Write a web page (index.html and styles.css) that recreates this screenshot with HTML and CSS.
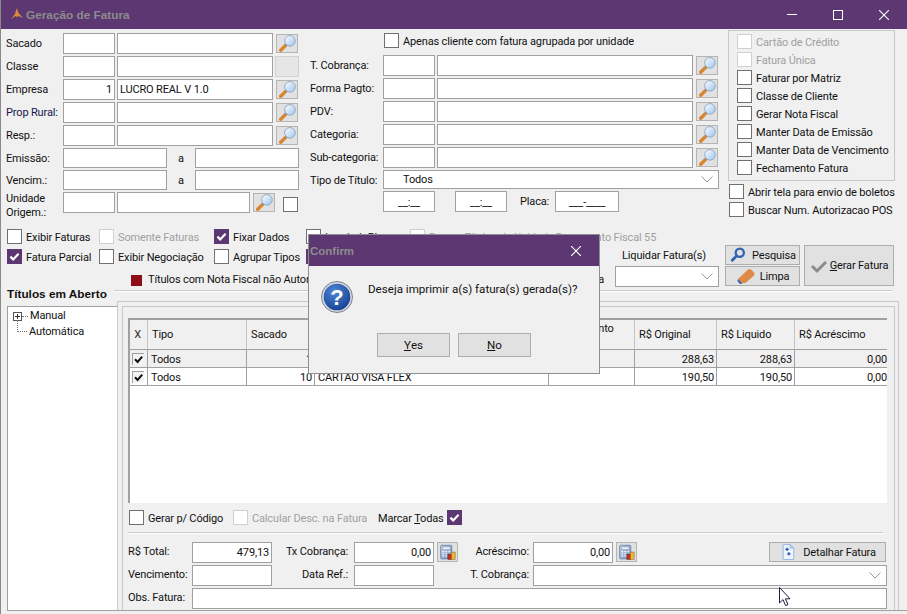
FILE: index.html
```html
<!DOCTYPE html>
<html lang="pt">
<head>
<meta charset="utf-8">
<title>Geração de Fatura</title>
<link rel="stylesheet" href="styles.css">
</head>
<body>
<svg class="sprite" aria-hidden="true">
  <defs>
    <linearGradient id="lens" x1="0" y1="0" x2="1" y2="1"><stop offset="0" stop-color="#ffffff"/><stop offset="1" stop-color="#9cc4ee"/></linearGradient>
    <linearGradient id="calc" x1="0" y1="0" x2="1" y2="1"><stop offset="0" stop-color="#c9d8ee"/><stop offset="1" stop-color="#6f8fc0"/></linearGradient>
    <radialGradient id="ball" cx="0.4" cy="0.3" r="0.8"><stop offset="0" stop-color="#4f86d6"/><stop offset="1" stop-color="#123a8c"/></radialGradient>
    <symbol id="i-mag" viewBox="0 0 18 18">
      <path d="M1.8 16.2 L7 11" stroke="#d8862f" stroke-width="3.6" stroke-linecap="round"/>
      <path d="M7 11 L8.6 9.4" stroke="#8a8f96" stroke-width="2.6"/>
      <circle cx="11.6" cy="6.2" r="5.6" fill="url(#lens)" stroke="#8fa6c0" stroke-width="1"/>
    </symbol>
    <symbol id="i-check" viewBox="0 0 15 15">
      <path d="M3.4 7.6 L6.2 10.4 L11.6 4.8" fill="none" stroke="#fff" stroke-width="2.2"/>
    </symbol>
    <symbol id="i-tick" viewBox="0 0 11 11">
      <path d="M2 5.2 L4.6 8 L9.2 2.6" fill="none" stroke="#111" stroke-width="2"/>
    </symbol>
    <symbol id="i-calc" viewBox="0 0 20 20">
      <rect x="2" y="1.5" width="13" height="16" rx="1" fill="url(#calc)" stroke="#6b7f9e"/>
      <rect x="4" y="3.5" width="9" height="3" fill="#eef4fb" stroke="#7f93b0" stroke-width=".6"/>
      <path d="M4 9h2M7.5 9h2M11 9h2M4 11.5h2M7.5 11.5h2M4 14h2M7.5 14h2" stroke="#f4f7fb" stroke-width="1.4"/>
      <rect x="10.5" y="12" width="4.5" height="6" fill="#c22f1a" stroke="#7d1c10" stroke-width=".6"/>
      <rect x="14.5" y="9.5" width="4.5" height="8.5" fill="#e6b53a" stroke="#8e6a14" stroke-width=".6"/>
    </symbol>
  </defs>
</svg>

<div class="window">
  <header class="titlebar">
    <svg class="title-icon" viewBox="0 0 14 14"><path d="M7 1 L8.5 6 L13 11 L8.5 9 L7 10 L5.5 9 L1 12 L5 7 L5.5 5 Z" fill="#d98a3a"/></svg>
    <span class="title-text">Geração de Fatura</span>
    <div class="win-btns">
      <span class="win-min"></span>
      <span class="win-max"></span>
      <svg class="win-x" viewBox="0 0 10 10"><path d="M0 0 L10 10 M10 0 L0 10" stroke="#fff" stroke-width="1.1"/></svg>
    </div>
  </header>

  <section class="top">
    <div class="col-left">
      <div class="row"><label class="lbl-l">Sacado</label><div class="fld w52"></div><div class="fld w156"></div><button class="icon-btn"><svg class="ic18m"><use href="#i-mag"/></svg></button></div>
      <div class="row"><label class="lbl-l">Classe</label><div class="fld w52"></div><div class="fld w156"></div><div class="blank-btn"></div></div>
      <div class="row"><label class="lbl-l">Empresa</label><div class="fld w52 num">1</div><div class="fld w156">LUCRO REAL V 1.0</div><button class="icon-btn"><svg class="ic18m"><use href="#i-mag"/></svg></button></div>
      <div class="row"><label class="lbl-l navy">Prop Rural:</label><div class="fld w52"></div><div class="fld w156"></div><button class="icon-btn"><svg class="ic18m"><use href="#i-mag"/></svg></button></div>
      <div class="row"><label class="lbl-l">Resp.:</label><div class="fld w52"></div><div class="fld w156"></div><button class="icon-btn"><svg class="ic18m"><use href="#i-mag"/></svg></button></div>
      <div class="row-s"><label class="lbl-l">Emissão:</label><div class="fld w104 h20"></div><span class="sep-a">a</span><div class="fld w104 h20"></div></div>
      <div class="row-s"><label class="lbl-l">Vencim.:</label><div class="fld w104 h20"></div><span class="sep-a">a</span><div class="fld w104 h20"></div></div>
      <div class="row-s"><label class="lbl-l two">Unidade Origem.:</label><div class="fld w52"></div><div class="fld w133"></div><button class="icon-btn"><svg class="ic18m"><use href="#i-mag"/></svg></button><span class="cb cb-unit"></span></div>
    </div>

    <div class="col-mid">
      <div class="apenas"><span class="cb"></span><span>Apenas cliente com fatura agrupada por unidade</span></div>
      <div class="row"><label class="lbl-m">T. Cobrança:</label><div class="fld w52"></div><div class="fld w256"></div><button class="icon-btn"><svg class="ic18m"><use href="#i-mag"/></svg></button></div>
      <div class="row"><label class="lbl-m">Forma Pagto:</label><div class="fld w52"></div><div class="fld w256"></div><button class="icon-btn"><svg class="ic18m"><use href="#i-mag"/></svg></button></div>
      <div class="row"><label class="lbl-m">PDV:</label><div class="fld w52"></div><div class="fld w256"></div><button class="icon-btn"><svg class="ic18m"><use href="#i-mag"/></svg></button></div>
      <div class="row"><label class="lbl-m">Categoria:</label><div class="fld w52"></div><div class="fld w256"></div><button class="icon-btn"><svg class="ic18m"><use href="#i-mag"/></svg></button></div>
      <div class="row"><label class="lbl-m">Sub-categoria:</label><div class="fld w52"></div><div class="fld w256"></div><button class="icon-btn"><svg class="ic18m"><use href="#i-mag"/></svg></button></div>
      <div class="row-tipo"><label class="lbl-m">Tipo de Título:</label><div class="fld w336 h19 sel"><span class="sel-text">Todos</span><svg class="chev" viewBox="0 0 12 7"><path d="M0.5 0.5 L6 6 L11.5 0.5" fill="none" stroke="#9a9a9a"/></svg></div></div>
      <div class="row-time">
        <div class="fld w52 mask">__:__</div>
        <div class="fld w52 mask gap20">__:__</div>
        <label class="lbl-placa">Placa:</label>
        <div class="fld w64 mask">___-____</div>
      </div>
    </div>

    <div class="col-right">
      <div class="groupbox">
        <div class="gb-row off"><span class="cb"></span>Cartão de Crédito</div>
        <div class="gb-row off"><span class="cb"></span>Fatura Única</div>
        <div class="gb-row"><span class="cb"></span>Faturar por Matriz</div>
        <div class="gb-row"><span class="cb"></span>Classe de Cliente</div>
        <div class="gb-row"><span class="cb"></span>Gerar Nota Fiscal</div>
        <div class="gb-row"><span class="cb"></span>Manter Data de Emissão</div>
        <div class="gb-row"><span class="cb"></span>Manter Data de Vencimento</div>
        <div class="gb-row"><span class="cb"></span>Fechamento Fatura</div>
      </div>
      <div class="extra-row"><span class="cb"></span>Abrir tela para envio de boletos</div>
      <div class="extra-row"><span class="cb"></span>Buscar Num. Autorizacao POS</div>
    </div>
  </section>

  <section class="opts">
    <div class="opts-left">
      <div class="opt-row">
        <div class="opt w92"><span class="cb"></span>Exibir Faturas</div>
        <div class="opt w115 off"><span class="cb"></span>Somente Faturas</div>
        <div class="opt w92"><span class="cb on"><svg class="ic15"><use href="#i-check"/></svg></span>Fixar Dados</div>
        <div class="opt w104"><span class="cb"></span>Imprimir Placa</div>
        <div class="opt off"><span class="cb"></span>Buscar Títulos da Unidade Documento Fiscal 55</div>
      </div>
      <div class="opt-row">
        <div class="opt w92"><span class="cb on"><svg class="ic15"><use href="#i-check"/></svg></span>Fatura Parcial</div>
        <div class="opt w115"><span class="cb"></span>Exibir Negociação</div>
        <div class="opt w92"><span class="cb"></span>Agrupar Tipos</div>
        <div class="opt"><span class="cb on"><svg class="ic15"><use href="#i-check"/></svg></span></div>
      </div>
      <div class="legend"><span class="legend-box"></span><span class="legend-text">Títulos com Nota Fiscal não Autorizada</span><span class="legend-tail">a</span></div>
    </div>
    <div class="liquidar">
      <div class="liq-label">Liquidar Fatura(s)</div>
      <div class="fld w104 h21 sel"><svg class="chev" viewBox="0 0 12 7"><path d="M0.5 0.5 L6 6 L11.5 0.5" fill="none" stroke="#9a9a9a"/></svg></div>
    </div>
    <div class="actions">
      <button class="btn btn-s"><svg class="ic18" viewBox="0 0 18 18"><circle cx="11" cy="6.5" r="4.6" fill="none" stroke="#2f64b4" stroke-width="2.6"/><path d="M7.4 10 L2.6 15" stroke="#2f64b4" stroke-width="3.2" stroke-linecap="round"/></svg><span>Pesquisa</span></button>
      <button class="btn btn-s btn-limpa"><svg class="ic20" viewBox="0 0 20 18"><path d="M2 12 L12 2.5 Q13.5 1.5 15 2.5 L18 5.5 Q19 7 18 8.5 L9.5 16 L6 16 Z" fill="#e08a48"/><path d="M2 12 L6.5 16.5 L4 17 L1.5 14 Z" fill="#2f5fa8"/></svg><span>Limpa</span></button>
    </div>
    <button class="btn btn-gerar"><svg class="ic18" viewBox="0 0 18 14"><path d="M2 7 L7 12 L16 3" fill="none" stroke="#8c8c8c" stroke-width="3"/></svg><span><u>G</u>erar Fatura</span></button>
  </section>

  <div class="heading-row"><h2 class="heading">Títulos em Aberto</h2><span class="heading-line"></span></div>

  <section class="body">
    <aside class="tree">
      <div class="tree-row"><span class="plus"></span><span class="dots-h"></span>Manual</div>
      <div class="tree-row tree-row-2"><span class="elbow"></span>Automática</div>
    </aside>
    <div class="outer">
      <div class="inner">
        <div class="grid">
          <table class="tbl">
            <colgroup><col class="c0"><col class="c1"><col class="c2"><col class="c3"><col class="c4"><col class="c5"><col class="c6"><col class="c7"></colgroup>
            <thead>
              <tr><th class="ctr">X</th><th>Tipo</th><th>Sacado</th><th></th><th class="desc">R$ Desconto</th><th>R$ Original</th><th>R$ Liquido</th><th>R$ Acréscimo</th></tr>
            </thead>
            <tbody>
              <tr class="sel-row"><td class="ctr"><span class="tick"><svg class="ic11"><use href="#i-tick"/></svg></span></td><td>Todos</td><td class="r">1</td><td></td><td></td><td class="r">288,63</td><td class="r">288,63</td><td class="r last">0,00</td></tr>
              <tr><td class="ctr"><span class="tick"><svg class="ic11"><use href="#i-tick"/></svg></span></td><td>Todos</td><td class="r">10</td><td>CARTAO VISA FLEX</td><td></td><td class="r">190,50</td><td class="r">190,50</td><td class="r last">0,00</td></tr>
            </tbody>
          </table>
        </div>

        <div class="marks">
          <div class="opt w104"><span class="cb"></span>Gerar p/ Código</div>
          <div class="opt w145 off"><span class="cb"></span>Calcular Desc. na Fatura</div>
          <div class="marcar"><span class="marcar-label">Marcar <u>T</u>odas</span><span class="cb on"><svg class="ic15"><use href="#i-check"/></svg></span></div>
        </div>
        <div class="divider"></div>

        <div class="frow">
          <label class="lbl-b">R$ Total:</label><div class="fld w80 num">479,13</div>
          <label class="lbl-r w82">Tx Cobrança:</label><div class="fld w80 num">0,00</div>
          <button class="calc-btn"><svg class="ic17"><use href="#i-calc"/></svg></button>
          <label class="lbl-r w75">Acréscimo:</label><div class="fld w80 num">0,00</div>
          <button class="calc-btn"><svg class="ic17"><use href="#i-calc"/></svg></button>
          <button class="btn btn-det"><svg class="ic18" viewBox="0 0 16 18"><path d="M2.5 .5 H10.5 L14.5 4.5 V17.5 H2.5 Z" fill="#eef4fb" stroke="#8fb0dc"/><path d="M10.5 .5 V4.5 H14.5" fill="#bcd2ee" stroke="#8fb0dc"/><path d="M5 6 H9 M7 4 V8 M7 11 H11 M9 9 V13" stroke="#1f5fb8" stroke-width="1.4"/></svg><span>Detalhar Fatura</span></button>
        </div>
        <div class="frow">
          <label class="lbl-b">Vencimento:</label><div class="fld w80"></div>
          <label class="lbl-r w82">Data Ref.:</label><div class="fld w80"></div>
          <label class="lbl-r w99">T. Cobrança:</label><div class="fld w354 sel"><svg class="chev" viewBox="0 0 12 7"><path d="M0.5 0.5 L6 6 L11.5 0.5" fill="none" stroke="#9a9a9a"/></svg></div>
        </div>
        <div class="frow">
          <label class="lbl-b">Obs. Fatura:</label><div class="fld w695"></div>
        </div>
      </div>
    </div>
  </section>
</div>

<div class="dialog" role="dialog">
  <div class="dlg-title">
    <span class="dlg-title-text">Confirm</span>
    <svg class="dlg-x" viewBox="0 0 10 10"><path d="M0 0 L10 10 M10 0 L0 10" stroke="#fff" stroke-width="1.2"/></svg>
  </div>
  <div class="dlg-body">
    <svg class="dlg-icon" viewBox="0 0 32 32">
      <circle cx="16" cy="16" r="15.5" fill="#d4d8de" stroke="#7d838c"/>
      <circle cx="16" cy="16" r="13.3" fill="url(#ball)"/>
      <text x="16" y="24" class="dlg-q">?</text>
    </svg>
    <p class="dlg-text">Deseja imprimir a(s) fatura(s) gerada(s)?</p>
  </div>
  <div class="dlg-btns">
    <button class="btn dlg-btn"><u>Y</u>es</button>
    <button class="btn dlg-btn"><u>N</u>o</button>
  </div>
</div>

<svg class="cursor" viewBox="0 0 12 20"><path d="M0.5 0.5 V16 L4 12.6 L6.6 18.6 L9 17.6 L6.4 11.8 H11 Z" fill="#fff" stroke="#2a1a3a"/></svg>
</body>
</html>
```

FILE: styles.css
```css
* { box-sizing: border-box; }
html, body { margin: 0; padding: 0; height: 614px; overflow: hidden; }
body { background: #f0f0f0; color: #111; font: 11px/14px Roboto, "Liberation Sans", Arial, sans-serif; letter-spacing: -.15px; position: relative; }
.sprite { position: absolute; width: 0; height: 0; }
button { font: inherit; color: inherit; letter-spacing: inherit; padding: 0; cursor: default; }
label { display: block; }

.window { width: 907px; height: 614px; border-left: 1px solid #8a8a8a; display: flex; flex-direction: column; }

.titlebar { height: 29px; flex: none; background: #5c3771; display: flex; align-items: center; padding-left: 9px; }
.title-icon { width: 14px; height: 14px; margin-top: -1px; }
.title-text { margin-left: 2px; color: #8c8c8c; font: bold 11.8px/14px "Liberation Sans", sans-serif; letter-spacing: 0; }
.win-btns { margin-left: auto; display: flex; align-items: center; }
.win-min { width: 10px; height: 1px; background: #fff; margin-right: 36px; }
.win-max { width: 10px; height: 10px; border: 1px solid #fff; margin-right: 36px; }
.win-x { width: 10px; height: 10px; margin-right: 18px; }

.top { height: 200px; flex: none; display: flex; padding-top: 1px; }
.col-left { width: 293px; margin-left: 5px; padding-top: 3px; flex: none; }
.col-mid { width: 409px; margin-left: 11px; padding-top: 3px; flex: none; }
.col-right { margin-left: 9px; width: 167px; flex: none; }

.row { display: flex; height: 21px; margin-bottom: 2px; gap: 2px; align-items: flex-start; }
.row-s { display: flex; height: 20px; margin-bottom: 2px; gap: 2px; align-items: flex-start; }
.lbl-l { width: 55px; flex: none; line-height: 22px; white-space: nowrap; }
.lbl-l.two { line-height: 14px; white-space: normal; }
.navy { color: #15154f; }
.lbl-m { width: 71px; flex: none; line-height: 22px; white-space: nowrap; }

.fld { height: 21px; background: #fff; border: 1px solid #a0a0a0; flex: none; line-height: 20px; padding: 0 2px; white-space: nowrap; position: relative; }
.h20 { height: 20px; }
.h19 { height: 19px; }
.h21 { height: 21px; }
.num { text-align: right; }
.w52 { width: 52px; }
.w64 { width: 64px; }
.w80 { width: 80px; }
.w104 { width: 104px; }
.w133 { width: 133px; }
.w156 { width: 156px; }
.w256 { width: 256px; }
.w336 { width: 336px; }
.w354 { width: 354px; }
.w695 { width: 695px; }

.icon-btn { width: 22px; height: 19px; margin: 1px 0 0 1px; background: #e1e1e1; border: 1px solid #b4b4b4; display: flex; align-items: center; justify-content: center; flex: none; }
.blank-btn { width: 24px; height: 21px; background: #e6e6e6; border: 1px solid #d2d2d2; flex: none; }
.ic18m { width: 17px; height: 17px; }
.ic15 { width: 15px; height: 15px; display: block; margin: -1px; }
.ic11 { width: 11px; height: 11px; display: block; }
.ic17 { width: 17px; height: 17px; }
.ic18 { width: 18px; height: 16px; flex: none; }
.ic20 { width: 20px; height: 18px; flex: none; }

.sep-a { width: 24px; text-align: center; line-height: 22px; flex: none; }
.cb { display: inline-block; width: 15px; height: 15px; border: 1px solid #707070; background: #fff; flex: none; }
.cb.on { background: #5c3771; border-color: #5c3771; }
.cb-unit { margin: 5px 0 0 6px; }

.apenas { display: flex; align-items: flex-start; height: 15px; line-height: 17px; margin: 0 0 7px 74px; gap: 4px; white-space: nowrap; }
.row-tipo { display: flex; height: 19px; gap: 2px; }
.row-time { display: flex; margin: 2px 0 0 73px; height: 21px; }
.sel { display: flex; align-items: center; }
.sel-text { margin-left: 17px; }
.chev { width: 14px; height: 7px; margin-left: auto; margin-right: 2px; }
.mask { text-align: center; line-height: 21px; }
.gap20 { margin-left: 20px; }
.lbl-placa { margin: 0 8px 0 13px; line-height: 21px; width: 27px; }

.groupbox { height: 151px; border: 1px solid #c8c8c8; padding: 3px 0 0 8px; }
.gb-row { display: flex; align-items: flex-start; gap: 4px; height: 18px; line-height: 18px; white-space: nowrap; }
.off { color: #a0a0a0; }
.off .cb { border-color: #d0d0d0; }
.extra-row { display: flex; align-items: flex-start; gap: 4px; height: 18px; line-height: 18px; white-space: nowrap; margin-left: 1px; }
.groupbox + .extra-row { margin-top: 3px; }

.opts { height: 58px; flex: none; display: flex; align-items: flex-start; }
.opts-left { width: 608px; margin-left: 6px; flex: none; }
.opt-row { display: flex; height: 20px; align-items: flex-start; }
.opt { display: flex; align-items: flex-start; line-height: 17px; gap: 4px; white-space: nowrap; flex: none; }
.w92 { width: 92px; }
.w115 { width: 115px; }
.w145 { width: 145px; }
.legend { margin: 4px 0 0 124px; display: flex; align-items: center; gap: 6px; white-space: nowrap; }
.legend-box { width: 11px; height: 11px; background: #8e0e16; flex: none; }
.legend-text { flex: none; }
.legend-tail { margin-left: auto; margin-right: 11px; flex: none; }
.liquidar { width: 104px; flex: none; margin-top: 20px; }
.liq-label { line-height: 13px; height: 17px; padding-left: 7px; }
.actions { margin-left: 6px; width: 75px; flex: none; margin-top: 16px; display: flex; flex-direction: column; gap: 1px; }
.btn { background: #e1e1e1; border: 1px solid #adadad; display: flex; align-items: center; justify-content: center; white-space: nowrap; flex: none; }
.btn-s { height: 20px; gap: 5px; }
.btn-s span, .btn-det span { padding-top: 2px; }
.btn-limpa { gap: 4px; }
.btn-gerar { width: 90px; height: 41px; margin: 16px 0 0 4px; gap: 2px; }

.heading-row { height: 14px; flex: none; display: flex; align-items: flex-start; margin-left: 6px; }
.heading { margin: 0; font: bold 11.8px/14px "Liberation Sans", sans-serif; letter-spacing: 0; width: 107px; white-space: nowrap; }
.heading-line { width: 778px; height: 2px; margin-top: 3px; background: #c8c8c8; border-bottom: 1px solid #fff; }

.body { height: 310px; flex: none; display: flex; margin-left: 6px; border-bottom: 1px solid #a0a0a0; }
.tree { width: 110px; margin-top: 5px; background: #fff; border: 1px solid #a0a0a0; border-width: 1px 0 0 1px; padding: 1px 0 0 5px; flex: none; }
.tree-row { display: flex; align-items: center; height: 16px; position: relative; }
.tree-row-2 { padding-left: 16px; }
.plus { width: 9px; height: 9px; border: 1px solid #555; background: linear-gradient(#333,#333) center/5px 1px no-repeat, linear-gradient(#333,#333) center/1px 5px no-repeat, #fff; flex: none; }
.dots-h { width: 6px; border-top: 1px dotted #777; margin: 0 2px 0 0; flex: none; }
.elbow { position: absolute; left: 4px; top: -4px; width: 10px; height: 12px; border-left: 1px dotted #777; border-bottom: 1px dotted #777; }

.outer { width: 782px; flex: none; border: 1px solid #c8c8c8; border-bottom: 0; padding: 4px 3px 0 4px; }
.inner { height: 304px; border: 1px solid #c8c8c8; border-bottom: 0; padding: 11px 7px 0 5px; }
.grid { height: 185px; background: #fff; border-top: 2px solid #a0a0a0; border-left: 2px solid #a0a0a0; }
.tbl { width: 757px; table-layout: fixed; border-collapse: separate; border-spacing: 0; }
.c0 { width: 18px; }
.c1 { width: 99px; }
.c2 { width: 68px; }
.c3 { width: 234px; }
.c4 { width: 86px; }
.c5 { width: 82px; }
.c6 { width: 78px; }
.c7 { width: 92px; }
.tbl th { height: 30px; background: #f0f0f0; font-weight: normal; text-align: left; padding: 0 4px; border-right: 1px solid #c4c4c4; border-bottom: 1px solid #a0a0a0; white-space: nowrap; overflow: hidden; }
.tbl th.desc { vertical-align: top; padding-top: 2px; }
.tbl th:last-child, .tbl td:last-child { border-right: 0; }
.tbl td { height: 18px; padding: 2px 3px 0; border-right: 1px solid #a0a0a0; border-bottom: 1px solid #a0a0a0; white-space: nowrap; overflow: hidden; }
.sel-row td { background: #f0f0f0; }
.tbl .r { text-align: right; padding-right: 2px; }
.tbl .last { padding-right: 0; }
.tbl .ctr { text-align: center; padding: 0 2px 0 0; color: #333; }
.tick { display: inline-block; width: 12px; height: 12px; border-top: 1px solid #a0a0a0; border-left: 1px solid #a0a0a0; background: #f4f4f4; vertical-align: middle; }

.marks { display: flex; align-items: center; height: 16px; margin: 7px 0 0 1px; }
.marcar { display: flex; align-items: flex-start; line-height: 17px; white-space: nowrap; }
.marcar-label { width: 69px; flex: none; }
.divider { height: 2px; width: 755px; margin-top: 6px; background: #c8c8c8; border-bottom: 1px solid #fff; }

.frow { display: flex; height: 21px; margin-bottom: 2px; align-items: flex-start; }
.divider + .frow { margin-top: 8px; }
.lbl-b { width: 64px; flex: none; line-height: 20px; white-space: nowrap; }
.lbl-r { flex: none; text-align: right; padding-right: 4px; line-height: 20px; white-space: nowrap; }
.w82 { width: 82px; padding-right: 6px; }
.w75 { width: 75px; }
.w99 { width: 99px; }
.calc-btn { width: 21px; height: 20px; margin-left: 3px; background: #e1e1e1; border: 1px solid #b4b4b4; display: flex; align-items: center; justify-content: center; flex: none; }
.btn-det { width: 117px; height: 20px; margin-left: 132px; gap: 6px; }

.dialog { position: absolute; left: 308px; top: 234px; width: 292px; height: 140px; background: #f0f0f0; border: 1px solid #8f8f8f; display: flex; flex-direction: column; font-size: 11.6px; letter-spacing: 0; }
.dlg-title { height: 31px; flex: none; background: #5c3771; display: flex; align-items: center; padding-left: 1px; }
.dlg-title-text { color: #8c8c8c; font: bold 11.5px/14px "Liberation Sans", sans-serif; }
.dlg-x { width: 10px; height: 10px; margin-left: auto; margin-right: 18px; }
.dlg-body { display: flex; align-items: flex-start; padding: 15px 0 0 12px; height: 67px; flex: none; }
.dlg-icon { width: 32px; height: 32px; flex: none; }
.dlg-q { font: bold 22px "Liberation Sans", sans-serif; fill: #fff; text-anchor: middle; }
.dlg-text { margin: 1px 0 0 15px; line-height: 14px; white-space: nowrap; }
.dlg-btns { display: flex; gap: 8px; padding-left: 68px; }
.dlg-btn { width: 73px; height: 24px; }

.cursor { position: absolute; left: 779px; top: 587px; width: 12px; height: 20px; }
```
